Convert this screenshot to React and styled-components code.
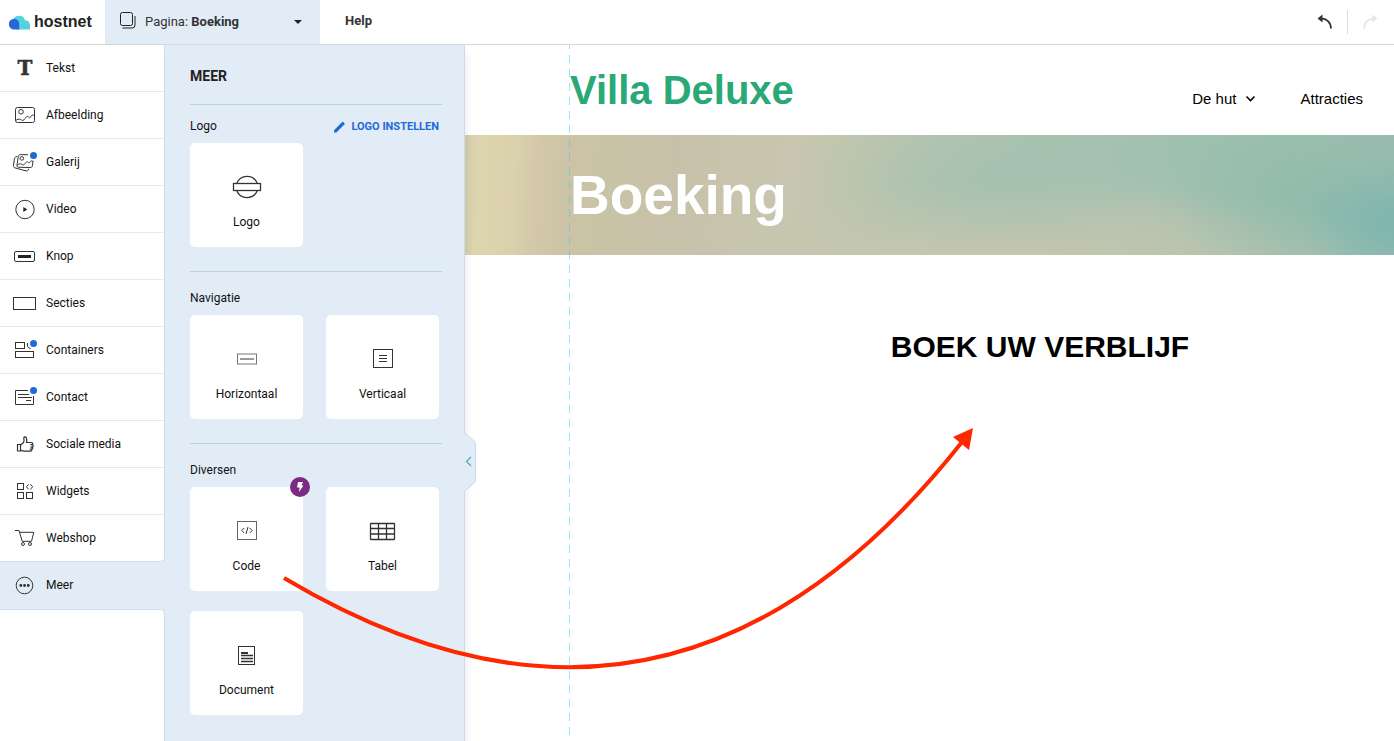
import React from "react";
import styled, { createGlobalStyle } from "styled-components";

const GlobalStyle = createGlobalStyle`
  * {
    box-sizing: border-box;
  }
  body {
    margin: 0;
    background: #ffffff;
    color: #111111;
    font-family: Roboto, "Liberation Sans", sans-serif;
    font-size: 12px;
    line-height: 16px;
  }
  button {
    margin: 0;
    padding: 0;
    border: none;
    background: none;
    color: inherit;
    font: inherit;
    cursor: pointer;
  }
  svg {
    display: block;
    flex: none;
  }
`;

const Editor = styled.div`
  position: relative;
  display: flex;
  flex-direction: column;
  min-height: 100vh;
  overflow: hidden;
`;

// Toolbar =========================

const Toolbar = styled.header`
  display: flex;
  align-items: center;
  height: 45px;
  border-bottom: 1px solid #d8d8d8;
  background: #ffffff;
`;

const Brand = styled.a`
  display: flex;
  align-items: center;
  gap: 4px;
  width: 105px;
  padding-left: 9px;
  color: #222222;
  font-family: "Liberation Sans", Arial, sans-serif;
  font-size: 16px;
  font-weight: 700;
  text-decoration: none;
`;

const PageSelect = styled.button`
  display: flex;
  align-items: center;
  gap: 8px;
  align-self: stretch;
  width: 215px;
  padding: 0 16px 0 14px;
  background: #e2ecf6;
  color: #333333;
  font-size: 13px;
  text-align: left;
  span {
    flex: 1;
  }
`;

const HelpButton = styled.button`
  margin-left: 25px;
  padding-bottom: 2px;
  color: #333333;
  font-size: 13px;
  font-weight: 700;
`;

const History = styled.div`
  display: flex;
  align-items: center;
  margin-left: auto;
  padding-right: 16px;
`;

const HistoryButton = styled.button`
  padding: 0 14px 0 0;
  color: ${({ disabled }) => (disabled ? "#e6e6e6" : "#333333")};
  & + & {
    padding: 0 0 0 14px;
    border-left: 1px solid #dddddd;
  }
  svg {
    margin: 3px 0;
  }
`;

// Side menu =========================

const Workspace = styled.div`
  display: flex;
  flex: 1;
`;

const SideMenu = styled.nav`
  display: flex;
  flex: none;
  flex-direction: column;
  width: 165px;
  background: #e2ecf6;
`;

const MenuItem = styled.button`
  display: flex;
  align-items: center;
  gap: 8px;
  height: 47px;
  padding-left: 12px;
  border-right: 1px solid #cfdfee;
  border-bottom: 1px solid #e9e9e9;
  background: #ffffff;
  text-align: left;
  ${({ $last }) =>
    $last &&
    `
    border-bottom-color: #cfdfee;
    border-bottom-right-radius: 5px;
  `}
  ${({ $active }) =>
    $active &&
    `
    border-color: transparent;
    background: none;
  `}
`;

const MenuRest = styled.div`
  flex: 1;
  border-top: 1px solid #cfdfee;
  border-right: 1px solid #cfdfee;
  border-top-right-radius: 5px;
  background: #ffffff;
`;

// Elements panel =========================

const Panel = styled.aside`
  position: relative;
  z-index: 1;
  flex: none;
  width: 300px;
  padding: 0 22px 26px 25px;
  border-right: 1px solid #c9dbec;
  background: #e2ecf6;
  box-shadow: 3px 8px 6px rgba(0, 0, 0, 0.06);
`;

const PanelTitle = styled.h2`
  margin: 0;
  padding: 21px 0 18px;
  font-size: 14px;
  font-weight: 700;
  line-height: 20px;
  color: #222222;
`;

const Group = styled.section`
  padding: ${({ $compact }) => ($compact ? "4px" : "9px")} 0 24px;
  border-top: 1px solid #b7d1ea;
`;

const GroupHead = styled.div`
  display: flex;
  align-items: center;
  justify-content: space-between;
  height: 34px;
  padding-right: 3px;
  h3 {
    margin: 0;
    font-size: 12px;
    font-weight: 400;
  }
`;

const SetupButton = styled.button`
  display: flex;
  align-items: center;
  gap: 6px;
  padding-top: 1px;
  color: #1f69d8;
  font-size: 11px;
  font-weight: 700;
`;

const Cards = styled.div`
  display: grid;
  grid-template-columns: repeat(2, 113px);
  gap: 20px 23px;
`;

const Card = styled.button`
  position: relative;
  display: flex;
  flex-direction: column;
  align-items: center;
  gap: 11px;
  height: 104px;
  padding-top: 28px;
  border-radius: 5px;
  background: #ffffff;
`;

const Badge = styled.span`
  position: absolute;
  top: -10px;
  right: -7px;
  display: flex;
  align-items: center;
  justify-content: center;
  width: 20px;
  height: 20px;
  border-radius: 50%;
  background: #7d2a86;
`;

const CollapseButton = styled.button`
  position: absolute;
  top: 387px;
  right: -12px;
`;

// Site preview =========================

const Site = styled.main`
  position: relative;
  flex: 1;
  min-width: 0;
  overflow: hidden;
  color: #000000;
  font-family: "Liberation Sans", Arial, sans-serif;
`;

const SiteHeader = styled.div`
  display: flex;
  align-items: center;
  justify-content: space-between;
  height: 90px;
  padding: 0 31px 0 105px;
`;

const SiteTitle = styled.h1`
  margin: 0;
  color: #2aa876;
  font-size: 40px;
  line-height: 44px;
`;

const SiteNav = styled.nav`
  display: flex;
  gap: 44px;
  padding-top: 18px;
  a {
    display: flex;
    align-items: center;
    gap: 9px;
    color: #000000;
    font-size: 15px;
    text-decoration: none;
  }
`;

const Banner = styled.div`
  display: flex;
  align-items: center;
  height: 120px;
  padding-left: 105px;
  background: radial-gradient(
      ellipse 100px 60px at 101% 74%,
      rgba(118, 180, 176, 0.8),
      rgba(118, 180, 176, 0)
    ),
    radial-gradient(
      ellipse 150px 80px at 92% 56%,
      rgba(134, 184, 170, 0.55),
      rgba(134, 184, 170, 0)
    ),
    radial-gradient(
      ellipse 170px 70px at 82% 14%,
      rgba(150, 190, 174, 0.6),
      rgba(150, 190, 174, 0)
    ),
    radial-gradient(
      ellipse 180px 70px at 56% 40%,
      rgba(160, 192, 176, 0.55),
      rgba(160, 192, 176, 0)
    ),
    radial-gradient(
      ellipse 400px 90px at 58% 110%,
      rgba(203, 199, 175, 0.95),
      rgba(196, 198, 174, 0.6) 55%,
      rgba(196, 198, 174, 0)
    ),
    linear-gradient(
      94deg,
      #d8cfac 0%,
      #ddd5ae 2%,
      #dbd2ad 5%,
      #d3c9a9 8%,
      #cdc3a6 11%,
      #c9c3a6 15%,
      #c8c1aa 23%,
      #c8c6b0 35%,
      #bfc6ae 42%,
      #b4c4b0 50%,
      #aac2b0 60%,
      #a8c2b0 74%,
      #9fc0ae 86%,
      #98bbaf 100%
    );
  h2 {
    margin: 0;
    color: #ffffff;
    font-size: 55px;
    line-height: 64px;
  }
`;

const SiteContent = styled.div`
  width: 940px;
  margin-left: 105px;
  padding-top: 74px;
  h2 {
    margin: 0;
    font-size: 30px;
    line-height: 36px;
    text-align: center;
  }
`;

const GridLine = styled.div`
  position: absolute;
  top: 0;
  bottom: 6px;
  left: 104px;
  width: 1px;
  background: repeating-linear-gradient(
    to bottom,
    rgba(0, 225, 255, 0.5) 0 4px,
    transparent 4px 10px,
    rgba(0, 225, 255, 0.5) 10px 14px
  );
`;

const DragArrow = styled.svg`
  position: absolute;
  top: 0;
  left: 0;
  z-index: 2;
  pointer-events: none;
`;

// Icons =========================

const NewDot = () => (
  <circle cx="21.5" cy="5.5" r="3.5" fill="#1f69d8" stroke="none" />
);

const menuIcons = {
  text: (
    <text
      x="13"
      y="19"
      fontFamily="DejaVu Serif, serif"
      fontSize="20"
      fontWeight="700"
      textAnchor="middle"
      fill="#333"
      stroke="#333"
      strokeWidth="0.5"
    >
      T
    </text>
  ),
  image: (
    <>
      <rect x="3.5" y="4.5" width="19" height="15" rx="2" />
      <circle cx="9" cy="8.8" r="2.3" />
      <path d="M3.8 17.5c1.500-1.200 3-1.800 4.600-1.100 1.500.7 2.300 1.600 3.600.4 1.600-1.500 2.400-3.600 3.600-3.400 1.200.3 1.400 1.600 2.300 1.400 1-.3 1.300-2.700 2.500-2.900.9 0 1.400.6 2 1.300" />
    </>
  ),
  gallery: (
    <>
      <path d="M16 4.700H8.200c-1.100 0-1.700.5-1.900 1.500L5 15.200c-.2 1.300.4 2.100 1.700 2.100l11.600.2c1.200 0 1.900-.5 2.100-1.700l.7-5" />
      <circle cx="9.800" cy="8.400" r="1.800" />
      <path d="M5.300 15.200c1.400-1.400 2.700-1.800 4-1.100 1.300.6 2 1.300 3.200.2 1.200-1.100 1.700-2.800 2.800-2.600 1 .2 1.100 1.300 2 1.100.8-.2 1.100-1.800 2-1.900.7-.1 1.100.3 1.700.8" />
      <path d="M5.200 6.300l-1.800.8c-.5.3-.7.600-.9 1.200L1.500 15.400c-.2 1.200.3 2 1.300 2.400l11.500 3.200c1.100.3 1.800-.3 2.400-2.300" />
      <NewDot />
    </>
  ),
  video: (
    <>
      <circle cx="13" cy="12.500" r="9.200" />
      <path d="M11.300 10v5l4-2.500z" fill="#222" stroke="none" />
    </>
  ),
  button: (
    <>
      <rect x="2.500" y="7.500" width="20" height="10" rx="1.500" />
      <rect x="6" y="11" width="13" height="3" fill="#222" stroke="none" />
    </>
  ),
  section: <rect x="1.500" y="6.500" width="22" height="12" />,
  containers: (
    <>
      <rect x="3.500" y="4.500" width="9" height="6" />
      <rect x="3.500" y="13.500" width="18" height="6" />
      <path d="M15.500 5v2c0 2 .8 3 3 3.500" />
      <NewDot />
    </>
  ),
  contact: (
    <>
      <path d="M16 5.500H3.500v14h18V11" />
      <path d="M6 9.500h11M6 12.500h14M14 15.500h5" />
      <NewDot />
    </>
  ),
  like: (
    <g strokeWidth="1.200">
      <path d="M5.500 12.500h3v6.500h-3z" />
      <path d="M8.500 13l2.800-2.200c.5-.5.700-1.300.7-2.200l-.2-2.800c.2-1.300 2-1.300 2.500 0 .6 1.500.6 3.200.2 4.700h4.700c1.500 0 2 1.400 1.200 2.200 1 .7.9 1.900.1 2.400.5.8.2 1.900-.6 2.100.2 1.200-.5 2-1.500 2h-5.200c-1.600 0-2.600-.7-4.700-.9" />
      <path d="M20.400 12.700h-2M20.400 15.100h-2M19.800 17.200h-2" />
    </g>
  ),
  widgets: (
    <>
      <rect x="5.500" y="4.500" width="6" height="6" />
      <rect x="5.500" y="13.500" width="6" height="6" />
      <rect x="14.500" y="13.500" width="6" height="6" />
      <path d="M16.600 5.300L14.400 7.800l2.200 2.500M18.400 5.300l2.200 2.500-2.200 2.500" />
    </>
  ),
  cart: (
    <>
      <path d="M3 4.500h4l3.200 10.800h9.300l2.300-9H7.600" />
      <circle cx="11" cy="18" r="1.500" />
      <circle cx="18" cy="18" r="1.500" />
    </>
  ),
  more: (
    <>
      <circle cx="12.500" cy="12.500" r="8.300" />
      <path d="M8.800 12.500h.1M12.500 12.500h.1M16.200 12.500h.1" strokeWidth="2.800" strokeLinecap="round" />
    </>
  ),
};

const cardIcons = {
  logo: (
    <>
      <path d="M5.700 12.500a11 11 0 0 1 20.600 0M5.700 19.500a11 11 0 0 0 20.600 0" strokeWidth="1.300" />
      <rect x="2.500" y="12.500" width="27" height="7" strokeWidth="1.300" />
    </>
  ),
  horizontal: (
    <g stroke="#777">
      <rect x="6.500" y="11" width="19" height="10" />
      <path d="M9 16h14" strokeWidth="1.500" />
    </g>
  ),
  vertical: (
    <>
      <rect x="6.500" y="6.500" width="19" height="18" />
      <path d="M12 12.500h8M12 15.500h8M12 18.500h8" />
    </>
  ),
  code: (
    <>
      <rect x="6.500" y="6.500" width="19" height="18" stroke="#666" />
      <path d="M13.300 13L10.800 15.500l2.500 2.500M18.700 13l2.500 2.500-2.500 2.500M17 12l-2 7" />
    </>
  ),
  table: (
    <>
      <rect x="3.500" y="8.500" width="24" height="16" rx="0.500" strokeWidth="1.300" />
      <path d="M11.500 8.500v16M19.500 8.500v16M3.500 13.500h24M3.500 19h24" strokeWidth="1.300" />
    </>
  ),
  document: (
    <>
      <rect x="7.500" y="7.500" width="16" height="18" />
      <path d="M10 14h7" strokeWidth="2" />
      <path d="M10 16.500h12M10 19.500h12M10 22.500h12" strokeWidth="1.300" />
    </>
  ),
};

const MenuIcon = ({ name }) => (
  <svg width="26" height="24" viewBox="0 0 26 24" fill="none" stroke="#333" aria-hidden="true">
    {menuIcons[name]}
  </svg>
);

const CardIcon = ({ name }) => (
  <svg width="31" height="32" viewBox="0 0 31 32" fill="none" stroke="#333" aria-hidden="true">
    {cardIcons[name]}
  </svg>
);

const HistoryIcon = ({ flip }) => (
  <svg width="16" height="18" viewBox="0 0 16 18" fill="none" aria-hidden="true">
    <g transform={flip ? "translate(16 0) scale(-1 1)" : undefined}>
      <path d="M4 5.500c5.500 0 9.800 3.500 10 10" stroke="currentColor" strokeWidth="1.800" />
      <path d="M0.500 5.500L5.500 1.500v8z" fill="currentColor" />
    </g>
  </svg>
);

const menuItems = [
  { label: "Tekst", icon: "text" },
  { label: "Afbeelding", icon: "image" },
  { label: "Galerij", icon: "gallery" },
  { label: "Video", icon: "video" },
  { label: "Knop", icon: "button" },
  { label: "Secties", icon: "section" },
  { label: "Containers", icon: "containers" },
  { label: "Contact", icon: "contact" },
  { label: "Sociale media", icon: "like" },
  { label: "Widgets", icon: "widgets" },
  { label: "Webshop", icon: "cart", last: true },
  { label: "Meer", icon: "more", active: true },
];

const groups = [
  {
    title: "Logo",
    action: "LOGO INSTELLEN",
    cards: [{ label: "Logo", icon: "logo" }],
  },
  {
    title: "Navigatie",
    cards: [
      { label: "Horizontaal", icon: "horizontal" },
      { label: "Verticaal", icon: "vertical" },
    ],
  },
  {
    title: "Diversen",
    cards: [
      { label: "Code", icon: "code", premium: true },
      { label: "Tabel", icon: "table" },
      { label: "Document", icon: "document" },
    ],
  },
];

const EditorToolbar = () => (
  <Toolbar>
    <Brand href="#">
      <svg width="21" height="15" viewBox="0 0 21 15" aria-hidden="true">
        <path d="M4 5.500A6.200 6.200 0 0 1 16 5.200 5 5 0 0 1 21 10v4.500H8z" fill="#52d3de" />
        <path d="M5.200 3.800a5 5 0 0 1 5 5.200v5.500h-5a5.300 5.300 0 0 1 0-10.700z" fill="#2767d5" />
      </svg>
      hostnet
    </Brand>
    <PageSelect type="button" aria-haspopup="listbox">
      <svg width="18" height="20" viewBox="0 0 18 20" fill="none" stroke="#222" aria-hidden="true">
        <rect x="1.500" y="0.500" width="12" height="13" rx="2" />
        <path d="M3.500 16h9.500a3 3 0 0 0 3-3V4" />
      </svg>
      <span>
        Pagina: <b>Boeking</b>
      </span>
      <svg width="12" height="6" viewBox="0 0 12 6" aria-hidden="true">
        <path d="M2 1h8L6 5z" fill="#222" />
      </svg>
    </PageSelect>
    <HelpButton type="button">Help</HelpButton>
    <History>
      <HistoryButton type="button" aria-label="Ongedaan maken">
        <HistoryIcon />
      </HistoryButton>
      <HistoryButton type="button" aria-label="Opnieuw" disabled>
        <HistoryIcon flip />
      </HistoryButton>
    </History>
  </Toolbar>
);

const ElementsPanel = () => (
  <Panel>
    <PanelTitle>MEER</PanelTitle>
    {groups.map(({ title, action, cards }) => (
      <Group key={title} $compact={Boolean(action)}>
        <GroupHead>
          <h3>{title}</h3>
          {action && (
            <SetupButton type="button">
              <svg width="11" height="12" viewBox="0 0 11 12" aria-hidden="true">
                <path d="M0 9.200L8.200 1q.5-.4 1 0l1.300 1.300q.4.500 0 1L2.400 11.500H0z" fill="#1f69d8" />
              </svg>
              {action}
            </SetupButton>
          )}
        </GroupHead>
        <Cards>
          {cards.map(({ label, icon, premium }) => (
            <Card key={label} type="button">
              <CardIcon name={icon} />
              {label}
              {premium && (
                <Badge>
                  <svg width="8" height="10" viewBox="0 0 8 10" aria-hidden="true">
                    <path d="M2 0h5L5.500 3.500H7.500L3 10l.6-4.500H1z" fill="#ffffff" />
                  </svg>
                </Badge>
              )}
            </Card>
          ))}
        </Cards>
      </Group>
    ))}
    <CollapseButton type="button" aria-label="Paneel inklappen">
      <svg width="12" height="60" viewBox="0 0 12 60" fill="none" aria-hidden="true">
        <path d="M0 .5L8.500 7.500q3 2 3 5v35q0 3-3 5L0 59.500z" fill="#e2ecf6" />
        <path d="M0 .5L8.500 7.500q3 2 3 5v35q0 3-3 5L0 59.500" stroke="#c3d8ea" />
        <path d="M7 25L2.500 29.500l4.500 4.500" stroke="#5aa5b4" strokeWidth="1.200" />
      </svg>
    </CollapseButton>
  </Panel>
);

const SitePreview = () => (
  <Site>
    <SiteHeader>
      <SiteTitle>Villa Deluxe</SiteTitle>
      <SiteNav>
        <a href="#hut">
          De hut
          <svg width="11" height="8" viewBox="0 0 11 8" fill="none" aria-hidden="true">
            <path d="M1.500 1.500l4 4 4-4" stroke="#000" strokeWidth="1.600" />
          </svg>
        </a>
        <a href="#attracties">Attracties</a>
      </SiteNav>
    </SiteHeader>
    <Banner>
      <h2>Boeking</h2>
    </Banner>
    <SiteContent>
      <h2>BOEK UW VERBLIJF</h2>
    </SiteContent>
    <GridLine />
  </Site>
);

const App = () => (
  <>
    <GlobalStyle />
    <Editor>
      <EditorToolbar />
      <Workspace>
        <SideMenu>
          {menuItems.map(({ label, icon, last, active }) => (
            <MenuItem key={label} type="button" $last={last} $active={active}>
              <MenuIcon name={icon} />
              {label}
            </MenuItem>
          ))}
          <MenuRest />
        </SideMenu>
        <ElementsPanel />
        <SitePreview />
      </Workspace>
      <DragArrow width="980" height="680" viewBox="0 0 980 680" fill="none" aria-hidden="true">
        <path d="M284 578Q672 809 962 442" stroke="#ff2600" strokeWidth="4" />
        <path d="M973 428l-20 9 16 13z" fill="#ff2600" />
      </DragArrow>
    </Editor>
  </>
);

export default App;
